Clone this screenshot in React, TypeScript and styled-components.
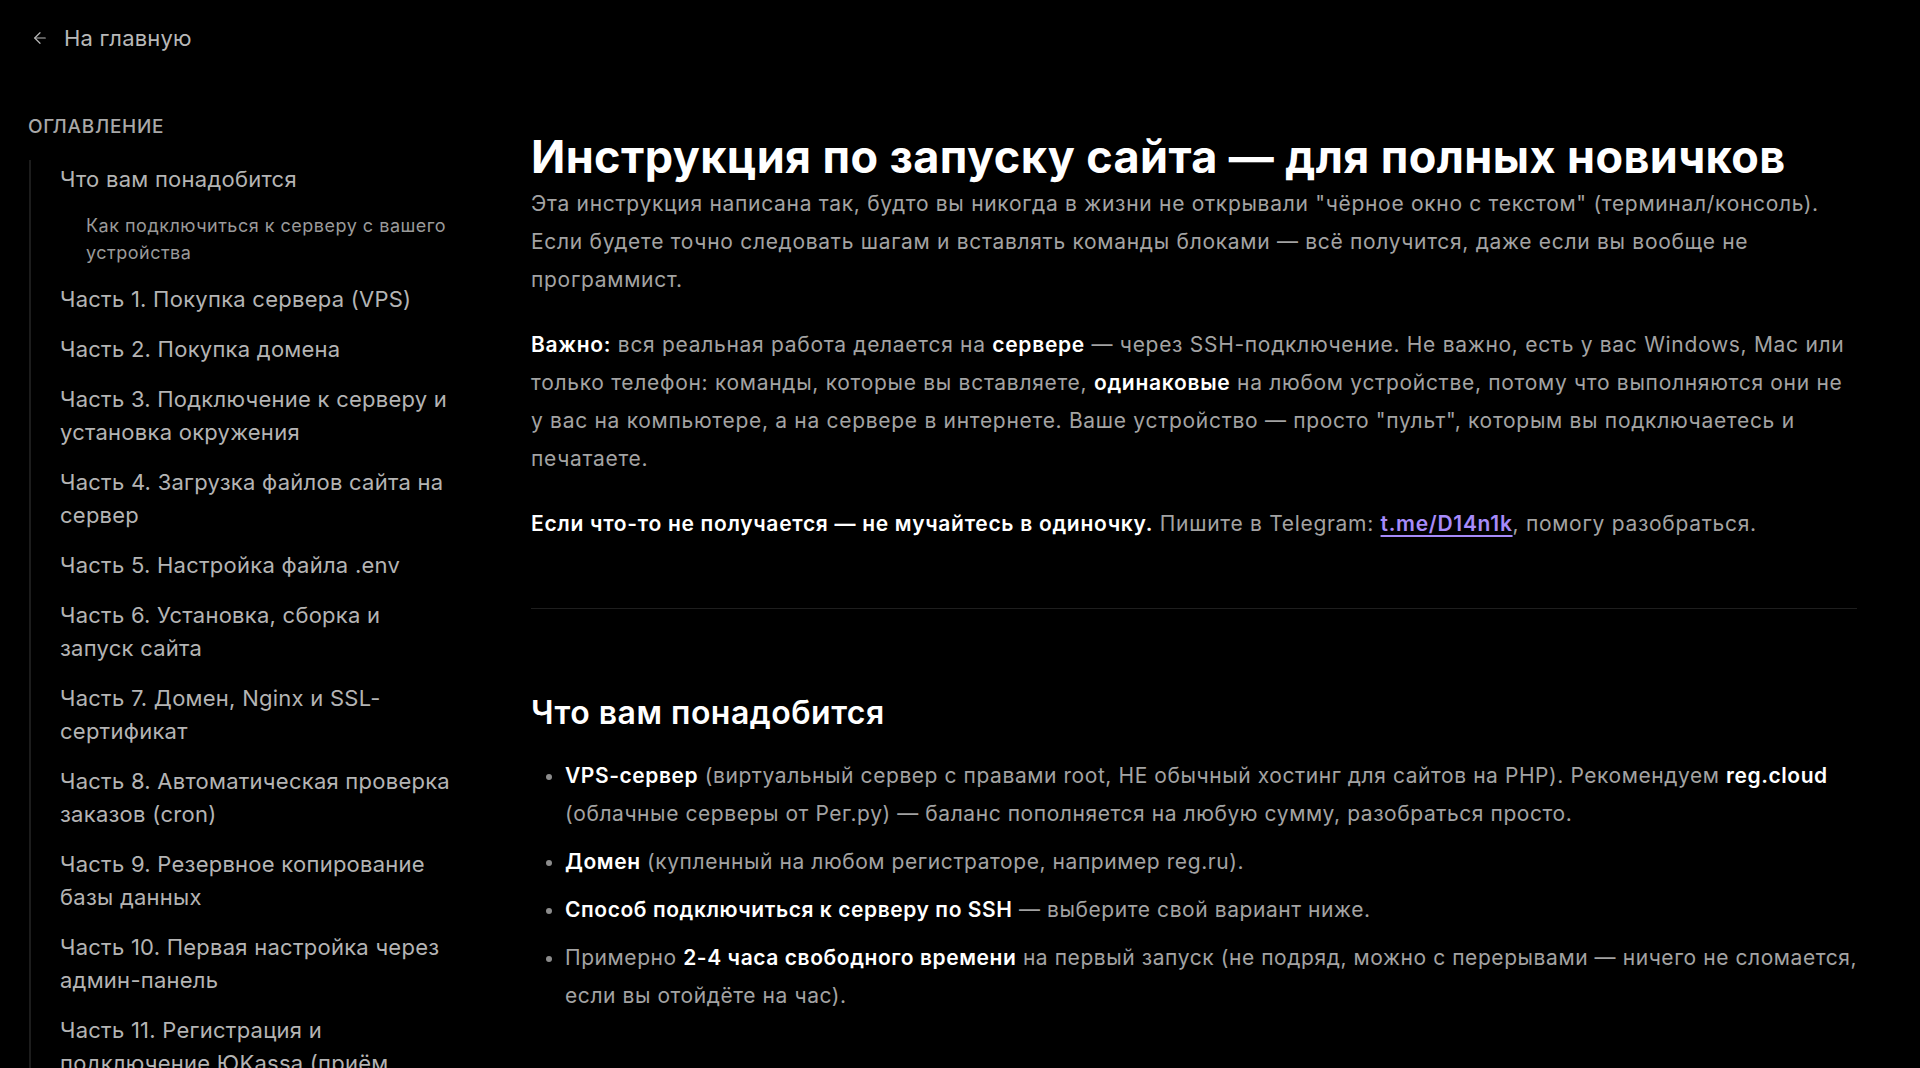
import React from 'react';
import styled, { createGlobalStyle } from 'styled-components';
import { ArrowLeft } from 'lucide-react';

const GlobalStyle = createGlobalStyle`
  html, body {
    margin: 0;
    padding: 0;
    background: #000;
  }
  body {
    font-family: Inter, "Noto Sans", "DejaVu Sans", sans-serif;
    color: #a3a3a3;
    -webkit-font-smoothing: antialiased;
  }
  * { box-sizing: border-box; }
`

const Page = styled.div`
  display: flex;
  height: 1068px;
  overflow: hidden;
`

const Sidebar = styled.aside`
  width: 470px;
  flex-shrink: 0;
  padding: 25px 16px 0 28px;
`

const BackLink = styled.a`
  display: inline-flex;
  align-items: center;
  gap: 15px;
  color: #b8b8b8;
  font-size: 22px;
  line-height: 26px;
  letter-spacing: 0.2px;
  text-decoration: none;
  margin-left: 3px;
`

const TocTitle = styled.div`
  margin-top: 64px;
  font-size: 19px;
  line-height: 24px;
  font-weight: 500;
  text-transform: uppercase;
  color: #a8a8a8;
  letter-spacing: 0.75px;
`

const TocList = styled.nav`
  margin-top: 21px;
  margin-left: 1px;
  border-left: 2px solid #1c1c1c;
  padding: 3px 0 0 29px;
  display: flex;
  flex-direction: column;
  gap: 17px;
  width: 424px;
`

const TocItem = styled.a<{ sub?: boolean }>`
  display: block;
  color: ${p => (p.sub ? '#9a9a9a' : '#b4b4b4')};
  font-size: ${p => (p.sub ? '18px' : '22px')};
  line-height: ${p => (p.sub ? '27px' : '33px')};
  letter-spacing: ${p => (p.sub ? '0.5px' : '0.25px')};
  padding-left: ${p => (p.sub ? '26px' : '0')};
  margin-top: ${p => (p.sub ? '-1px' : '0')};
  text-decoration: none;
`

const Main = styled.main`
  flex: 1;
  padding: 130px 63px 0 61px;
`

const Title = styled.h1`
  margin: 0;
  color: #fff;
  font-size: 45px;
  line-height: 54px;
  font-weight: 700;
  letter-spacing: 0.4px;
`

const Paragraph = styled.p`
  margin: 1px 0 27px;
  font-size: 21px;
  line-height: 38px;
  letter-spacing: 0.7px;
  color: #a3a3a3;
`

const Strong = styled.strong`
  color: #fff;
  font-weight: 600;
`

const Link = styled.a`
  color: #a78bfa;
  font-weight: 600;
  text-decoration: underline;
  text-underline-offset: 4px;
`

const Divider = styled.hr`
  margin: 65px 0 0;
  border: none;
  border-top: 1px solid #1e1e1e;
`

const Section = styled.section`
  padding-top: 84px;
`

const Heading = styled.h2`
  margin: 0 0 24px;
  color: #fff;
  font-size: 32px;
  line-height: 40px;
  font-weight: 600;
  letter-spacing: 0.5px;
`

const List = styled.ul`
  margin: 0 -14px 0 0;
  padding-left: 34px;
  list-style: disc;
`

const Item = styled.li`
  font-size: 21px;
  line-height: 38px;
  letter-spacing: 0.57px;
  margin-bottom: 10px;
  color: #a3a3a3;
  &::marker {
    color: #8c8c8c;
    font-size: 20px;
  }
`

const toc: { label: string; sub?: boolean }[] = [
  { label: 'Что вам понадобится' },
  { label: 'Как подключиться к серверу с вашего устройства', sub: true },
  { label: 'Часть 1. Покупка сервера (VPS)' },
  { label: 'Часть 2. Покупка домена' },
  { label: 'Часть 3. Подключение к серверу и установка окружения' },
  { label: 'Часть 4. Загрузка файлов сайта на сервер' },
  { label: 'Часть 5. Настройка файла .env' },
  { label: 'Часть 6. Установка, сборка и запуск сайта' },
  { label: 'Часть 7. Домен, Nginx и SSL-сертификат' },
  { label: 'Часть 8. Автоматическая проверка заказов (cron)' },
  { label: 'Часть 9. Резервное копирование базы данных' },
  { label: 'Часть 10. Первая настройка через админ-панель' },
  { label: 'Часть 11. Регистрация и подключение ЮKassa (приём платежей)' },
]

export default function App() {
  return (
    <>
      <GlobalStyle />
      <Page>
        <Sidebar>
          <BackLink href="#">
            <ArrowLeft size={18} strokeWidth={1.6} />
            На главную
          </BackLink>
          <TocTitle>Оглавление</TocTitle>
          <TocList>
            {toc.map(t => (
              <TocItem key={t.label} sub={t.sub} href="#">
                {t.label}
              </TocItem>
            ))}
          </TocList>
        </Sidebar>
        <Main>
          <Title>Инструкция по запуску сайта — для полных новичков</Title>
          <Paragraph>
            Эта инструкция написана так, будто вы никогда в жизни не открывали "чёрное окно с текстом" (терминал/консоль).
            Если будете точно следовать шагам и вставлять команды блоками — всё получится, даже если вы вообще не
            программист.
          </Paragraph>
          <Paragraph>
            <Strong>Важно:</Strong> вся реальная работа делается на <Strong>сервере</Strong> — через SSH-подключение. Не
            важно, есть у вас Windows, Mac или только телефон: команды, которые вы вставляете, <Strong>одинаковые</Strong> на
            любом устройстве, потому что выполняются они не у вас на компьютере, а на сервере в интернете. Ваше
            устройство — просто "пульт", которым вы подключаетесь и печатаете.
          </Paragraph>
          <Paragraph>
            <Strong>Если что-то не получается — не мучайтесь в одиночку.</Strong> Пишите в Telegram:{' '}
            <Link href="#">t.me/D14n1k</Link>, помогу разобраться.
          </Paragraph>
          <Divider />
          <Section>
            <Heading>Что вам понадобится</Heading>
            <List>
              <Item>
                <Strong>VPS-сервер</Strong> (виртуальный сервер с правами root, НЕ обычный хостинг для сайтов на PHP).
                Рекомендуем <Strong>reg.cloud</Strong> (облачные серверы от Рег.ру) — баланс пополняется на любую сумму,
                разобраться просто.
              </Item>
              <Item>
                <Strong>Домен</Strong> (купленный на любом регистраторе, например reg.ru).
              </Item>
              <Item>
                <Strong>Способ подключиться к серверу по SSH</Strong> — выберите свой вариант ниже.
              </Item>
              <Item>
                Примерно <Strong>2-4 часа свободного времени</Strong> на первый запуск (не подряд, можно с перерывами —
                ничего не сломается, если вы отойдёте на час).
              </Item>
            </List>
          </Section>
        </Main>
      </Page>
    </>
  );
}
